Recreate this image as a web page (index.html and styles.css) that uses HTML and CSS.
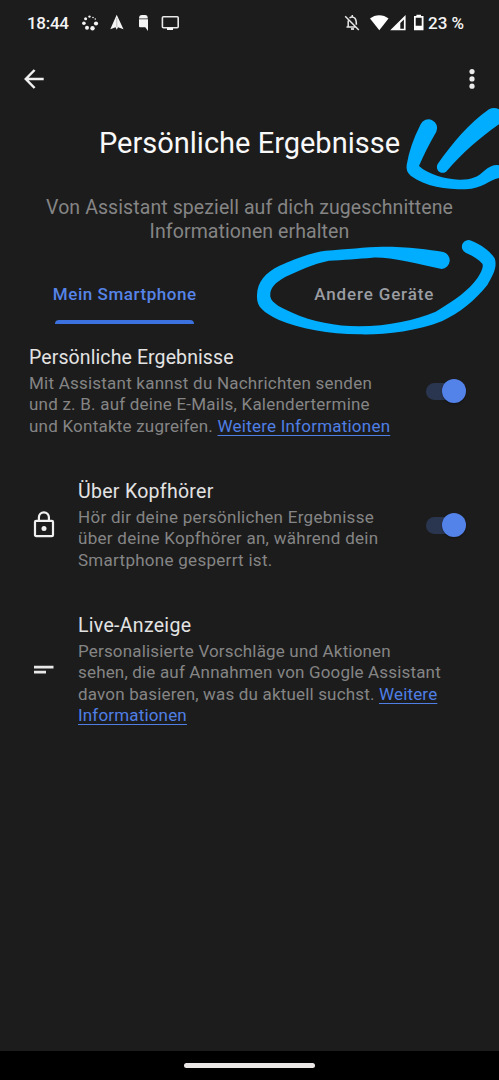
FILE: index.html
```
<!DOCTYPE html>
<html lang="de">
<head>
    <meta charset="UTF-8">
    <meta name="viewport" content="width=device-width, initial-scale=1.0">
    <title>Persönliche Ergebnisse</title>
    <link rel="stylesheet" href="styles.css">
</head>
<body>
    <div class="screen">
        <div class="status-bar">
            <span class="time">18:44</span>
            <svg class="status-left" viewBox="80 12 102 22" width="102" height="22" fill="#f4f4f4">
                <circle cx="89.5" cy="16.6" r="1.2"/><circle cx="93" cy="17.5" r="0.8"/>
                <circle cx="85.6" cy="18.8" r="1.5"/><circle cx="83.9" cy="23.3" r="1.8"/>
                <circle cx="87" cy="27.7" r="2"/><circle cx="92.5" cy="28.3" r="2.2"/>
                <circle cx="96" cy="23.5" r="2.1"/><circle cx="95.3" cy="19" r="0.8"/>
                <path d="M116.7 14.8L110.3 29.3L115.6 27.2L116.7 29.8L118 27.2L123.5 29.3Z"/>
                <path d="M116.8 18V27" stroke="#999" stroke-width="0.6"/>
                <path d="M139 18.4Q139 15 142 15H145Q147.8 15 147.8 18.4ZM139 19.3H148V31L145.3 27.2H140Q139 27.2 139 26Z"/>
                <rect x="162.4" y="16.7" width="15.8" height="11.1" rx="1" fill="none" stroke="#e8e8e8" stroke-width="1.6"/>
                <path d="M167 28H173V30H167Z"/>
            </svg>
            <svg class="status-right" viewBox="343 12 82 22" width="82" height="22" fill="#fff">
                <g fill="none" stroke="#e6e6e6" stroke-width="1.5">
                    <path d="M345.2 16.2L358.8 30.1M348.2 20.5V26.5M346.5 26.9H355.5M349.5 18Q352.3 15.8 355 18.3Q356.4 20 356.4 24.8"/>
                    <path d="M351 29H354" stroke-width="1.8"/>
                    <path d="M352.3 15V17"/>
                </g>
                <path d="M370 18.6C375 14 383.5 14 388.5 18.6L379.3 30.3Z"/>
                <path fill-rule="evenodd" d="M405.6 15V30.3H390.2ZM403.9 19.5L400.3 23V28.8H403.9Z"/>
                <path fill-rule="evenodd" d="M416.4 14.7H421V16H423.5V30.3H414V16H416.4ZM415.7 17.8V25.8H421.7V17.8Z"/>
            </svg>
            <span class="battery">23 %</span>
        </div>

        <div class="toolbar">
            <svg viewBox="0 0 20 20" width="20" height="20" fill="none" stroke="#f0f0f0" stroke-width="2.5">
                <path d="M19.7 10H2.3M10.6 1L1.8 10L10.6 19"/>
            </svg>
            <svg viewBox="0 0 6 20" width="6" height="20" fill="#eaeaea">
                <circle cx="3" cy="2.6" r="2.6"/>
                <circle cx="3" cy="9.9" r="2.6"/>
                <circle cx="3" cy="17.2" r="2.6"/>
            </svg>
        </div>

        <h1>Persönliche Ergebnisse</h1>
        <p class="intro">Von Assistant speziell auf dich zugeschnittene<br>Informationen erhalten</p>

        <div class="tabs">
            <div class="tab active"><span>Mein Smartphone</span></div>
            <div class="tab"><span>Andere Geräte</span></div>
        </div>

        <div class="setting main-setting">
            <div class="text">
                <h2>Persönliche Ergebnisse</h2>
                <p>Mit Assistant kannst du Nachrichten senden<br>und z. B. auf deine E-Mails, Kalendertermine<br>und Kontakte zugreifen. <a href="#">Weitere Informationen</a></p>
            </div>
            <div class="switch"></div>
        </div>

        <div class="setting headphones">
            <div class="icon">
                <svg viewBox="0 0 22 28" width="22" height="28" fill="none" stroke="#f0f0f0" stroke-width="2.2">
                    <rect x="2" y="9.9" width="18" height="15.2" rx="1.2"/>
                    <path d="M5.9 9.5V6.3A5 5 0 0 1 15.9 6.3V9.5"/>
                    <circle cx="11" cy="17.6" r="2.5" fill="#f0f0f0" stroke="none"/>
                </svg>
            </div>
            <div class="text">
                <h2>Über Kopfhörer</h2>
                <p>Hör dir deine persönlichen Ergebnisse<br>über deine Kopfhörer an, während dein<br>Smartphone gesperrt ist.</p>
            </div>
            <div class="switch"></div>
        </div>

        <div class="setting live">
            <div class="icon">
                <svg viewBox="0 0 22 10" width="22" height="10" fill="#e8e8e8">
                    <path d="M1 0.8H20.5V3.4H1ZM1 5.8H13V8.4H1Z"/>
                </svg>
            </div>
            <div class="text">
                <h2>Live-Anzeige</h2>
                <p>Personalisierte Vorschläge und Aktionen<br>sehen, die auf Annahmen von Google Assistant<br>davon basieren, was du aktuell suchst. <a href="#">Weitere<br>Informationen</a></p>
            </div>
        </div>

        <div class="nav-bar"><div class="handle"></div></div>

        <!-- hand-drawn marker -->
        <svg class="marker" viewBox="0 0 750 780">
            <path d="M515 103Q483 165 473 225Q470 245 485 257C530 290 590 298 650 298C700 296 720 270 750 264V226Q730 222 705 243C685 262 665 270 630 269C590 267 540 255 510 228Q530 180 562 125A25 25 0 0 0 515 103Z"/>
            <path d="M566 222C610 160 660 100 720 58Q735 50 750 58V103C690 145 640 190 596 240A17 17 0 0 1 566 222Z"/>
            <path d="M578 537C500 520 420 500 370 503C330 506 280 510 240 512C190 522 150 542 110 560C75 580 62 595 64 620C68 640 100 655 130 668C190 695 260 708 330 709C420 708 500 690 560 665C620 630 660 600 685 565Q706 532 700 521C685 505 665 495 650 488A18 18 0 0 1 667 452C700 465 725 485 737 505C745 530 735 550 715 585C680 630 630 670 580 693C500 725 400 735 330 733C240 733 150 715 90 690C40 665 22 650 24 615C25 575 50 548 90 528C140 505 190 487 230 482C290 478 350 471 400 470C480 470 540 478 583 486A26 26 0 0 1 578 537Z"/>
        </svg>
    </div>
</body>
</html>
```
FILE: styles.css
```
* {
    margin: 0;
    padding: 0;
    box-sizing: border-box;
}

body {
    font-family: Roboto, "Open Sans", sans-serif;
    background-color: #1c1c1c;
    color: #e3e3e3;
}

.screen {
    position: relative;
    width: 499px;
    height: 1080px;
    display: flex;
    flex-direction: column;
    overflow: hidden;
}

svg {
    display: block;
    flex: none;
}

.status-bar {
    height: 46px;
    padding: 0 34px 0 27px;
    display: flex;
    align-items: center;
    color: #f4f4f4;
    font-size: 17px;
    font-weight: 500;
}

.time {
    width: 53px;
    letter-spacing: -0.3px;
}

.status-right {
    margin-left: auto;
}

.battery {
    width: 37px;
    margin-left: 3px;
    white-space: nowrap;
}

.toolbar {
    height: 66px;
    padding: 0 24px;
    display: flex;
    justify-content: space-between;
    align-items: center;
}

h1 {
    height: 64px;
    line-height: 63px;
    text-align: center;
    font-size: 29px;
    font-weight: 400;
    color: #f8f8f8;
}

.intro {
    margin-top: 20px;
    text-align: center;
    font-size: 19.5px;
    line-height: 24px;
    letter-spacing: 0.09px;
    color: #858585;
}

.tabs {
    display: flex;
    height: 80px;
}

.tab {
    flex: 1;
    padding-top: 39px;
    text-align: center;
    font-size: 17px;
    line-height: 22px;
    font-weight: 500;
    letter-spacing: 0.85px;
    color: #9a9da2;
}

.tab.active {
    letter-spacing: 0.55px;
    color: #5684e8;
}

.tab.active::after {
    content: "";
    display: block;
    width: 139px;
    height: 4px;
    margin: 15px auto 0;
    border-radius: 4px 4px 0 0;
    background-color: #3b72df;
}

.setting {
    display: flex;
    align-items: center;
    height: 134px;
    padding-right: 33px;
}

.main-setting {
    padding-left: 29px;
}

.live {
    height: 155px;
}

.icon {
    width: 78px;
    padding-left: 33px;
}

.text {
    flex: 1;
    white-space: nowrap;
}

h2 {
    margin-bottom: 2px;
    font-size: 19.5px;
    line-height: 26px;
    font-weight: 400;
    letter-spacing: 0.1px;
}

.text p {
    font-size: 17px;
    line-height: 21.2px;
    letter-spacing: 0.22px;
    color: #858585;
}

.headphones p {
    letter-spacing: 0.28px;
}

.headphones h2,
.live h2 {
    letter-spacing: 0.3px;
}

.live p {
    letter-spacing: 0.17px;
}

a {
    color: #4f7fe5;
    text-underline-offset: 3px;
    text-decoration-thickness: 1px;
}

.switch {
    display: flex;
    justify-content: flex-end;
    align-items: center;
    width: 40px;
    height: 17px;
    border-radius: 9px;
    background-color: #2a3650;
}

.switch::after {
    content: "";
    width: 24px;
    height: 24px;
    flex: none;
    border-radius: 50%;
    background-color: #5382e8;
    box-shadow: 0 1px 2px rgba(0, 0, 0, 0.4);
}

.nav-bar {
    height: 29px;
    margin-top: auto;
    display: flex;
    justify-content: center;
    align-items: center;
    background-color: #000;
}

.handle {
    width: 131px;
    height: 5px;
    border-radius: 3px;
    background-color: #ebe7e7;
}

.marker {
    position: absolute;
    left: 249px;
    top: 90px;
    width: 250px;
    height: 260px;
    fill: #00adff;
}
```
